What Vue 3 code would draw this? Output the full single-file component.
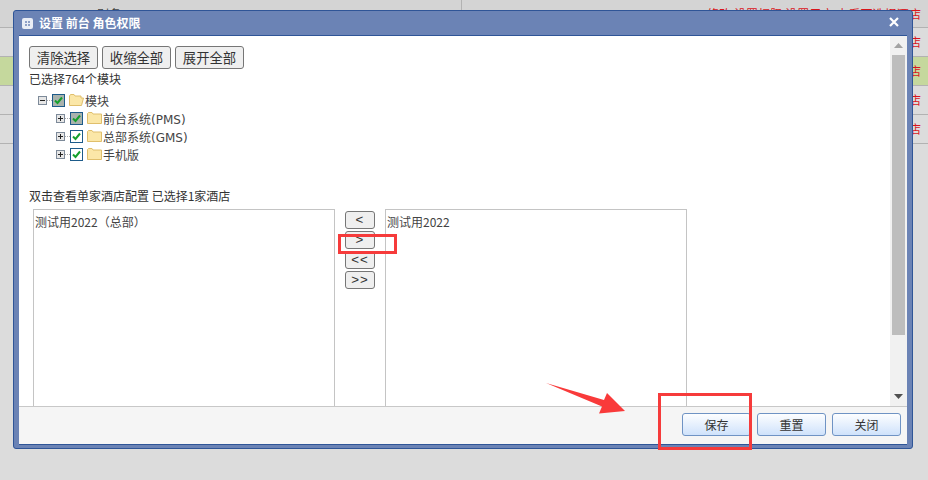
<script setup>
const rows = [
  { id: 1, name: '别名', green: false },
  { id: 2, name: '', green: false },
  { id: 3, name: '', green: true },
  { id: 4, name: '', green: false },
  { id: 5, name: '', green: false }
]
const tree = [
  { label: '前台系统(PMS)', partial: true },
  { label: '总部系统(GMS)', partial: false },
  { label: '手机版', partial: false }
]
const moveButtons = ['<', '>', '<<', '>>']
</script>

<template>
  <div class="screen">
    <div class="table">
      <div v-for="r in rows" :key="r.id" class="row" :class="{ green: r.green, head: r.id === 1 }">
        <span class="cell-name">{{ r.name }}</span>
        <span v-if="r.id === 1" class="cell-divider"></span>
        <span class="cell-ops">修改 设置权限 设置用户 查看可选择酒店</span>
      </div>
    </div>

    <div class="dialog">
      <div class="title">
        <svg class="title-icon" width="11" height="11" viewBox="0 0 11 11">
          <rect x="0" y="0" width="11" height="11" rx="2" fill="#e9edf5" />
          <rect x="3" y="3" width="2" height="2" fill="#8d9fc6" />
          <rect x="6" y="3" width="2" height="2" fill="#8d9fc6" />
          <rect x="3" y="6" width="2" height="2" fill="#8d9fc6" />
          <rect x="6" y="6" width="2" height="2" fill="#8d9fc6" />
        </svg>
        <span class="title-text">设置 前台 角色权限</span>
        <svg class="close" width="10" height="10" viewBox="0 0 10 10">
          <path d="M1 1 L9 9 M9 1 L1 9" stroke="#fff" stroke-width="2.2" fill="none" />
        </svg>
      </div>

      <div class="inner">
        <div class="scroller">
          <div class="content">
            <div class="top-buttons">
              <button class="plain">清除选择</button>
              <button class="plain">收缩全部</button>
              <button class="plain">展开全部</button>
            </div>
            <div class="line selected">已选择764个模块</div>

            <div class="tree">
              <div class="node root">
                <svg class="toggle" width="9" height="9" viewBox="0 0 9 9">
                  <rect x=".5" y=".5" width="8" height="8" fill="#e6e6e6" stroke="#7d8a99" />
                  <path d="M2 4.5 H7" stroke="#222" />
                </svg>
                <span class="dash"></span>
                <span class="check partial">
                  <svg width="11" height="11" viewBox="0 0 11 11"><path d="M2 5.5 L4.5 8 L9 2.5" stroke="#16a02c" stroke-width="2" fill="none" /></svg>
                </span>
                <svg class="folder" width="15" height="12" viewBox="0 0 15 12">
                  <path d="M.5 2 L1.5 .5 H5 L6 2 H12 V4 H14.5 L12.5 11.5 H.5 Z" fill="#fbe7a8" stroke="#e0bf6c" />
                </svg>
                <span class="label">模块</span>
              </div>
              <div v-for="n in tree" :key="n.label" class="node child">
                <svg class="toggle" width="9" height="9" viewBox="0 0 9 9">
                  <rect x=".5" y=".5" width="8" height="8" fill="#e6e6e6" stroke="#7d8a99" />
                  <path d="M2 4.5 H7 M4.5 2 V7" stroke="#222" />
                </svg>
                <span class="dash"></span>
                <span class="check" :class="{ partial: n.partial }">
                  <svg width="11" height="11" viewBox="0 0 11 11"><path d="M2 5.5 L4.5 8 L9 2.5" stroke="#16a02c" stroke-width="2" fill="none" /></svg>
                </span>
                <svg class="folder" width="15" height="12" viewBox="0 0 15 12">
                  <path d="M.5 1.5 L1.5 .5 H5 L6 2 H14.5 V11.5 H.5 Z" fill="#fbe7a8" stroke="#e0bf6c" />
                </svg>
                <span class="label">{{ n.label }}</span>
              </div>
            </div>

            <div class="line hint">双击查看单家酒店配置 已选择1家酒店</div>

            <div class="transfer">
              <div class="listbox">测试用2022（总部）</div>
              <div class="move">
                <button v-for="b in moveButtons" :key="b" class="plain small">{{ b }}</button>
              </div>
              <div class="listbox">测试用2022</div>
            </div>
          </div>

          <div class="scrollbar">
            <svg width="9" height="5" viewBox="0 0 9 5"><path d="M0 5 L4.5 0 L9 5 Z" fill="#a3a3a3" /></svg>
            <div class="thumb"></div>
            <svg width="9" height="5" viewBox="0 0 9 5"><path d="M0 0 L4.5 5 L9 0 Z" fill="#505050" /></svg>
          </div>
        </div>

        <div class="footer">
          <button class="blue">保存</button>
          <button class="blue">重置</button>
          <button class="blue">关闭</button>
        </div>
      </div>
    </div>

    <div class="mark mark-move"></div>
    <div class="mark mark-save"></div>
    <svg class="arrow" width="928" height="480" viewBox="0 0 928 480">
      <path d="M546 383 L604 400 L607 393 L625 411 L599 413.5 L602 406.5 Z" fill="#f93a3a" />
    </svg>
  </div>
</template>

<style>
html, body { margin: 0; padding: 0; background: #dcdcdc; }
</style>

<style scoped>
.screen {
  position: relative;
  width: 928px;
  height: 480px;
  overflow: hidden;
  background: #dcdcdc;
  font-family: "Noto Sans CJK SC", "Liberation Sans", sans-serif;
  font-size: 12px;
  color: #333;
}
.table { display: flex; flex-direction: column; }
.row {
  position: relative;
  display: flex;
  justify-content: space-between;
  align-items: center;
  height: 28px;
  border-bottom: 1px solid #b2b2b2;
  padding-right: 7px;
  line-height: 28px;
  white-space: nowrap;
}
.row.head {
  height: 27px;
  background: #d4d4d4;
}
.row.green { background: #c5d89d; }
.cell-name { margin-left: 97px; color: #444; }
.cell-divider {
  position: absolute;
  left: 461px;
  top: 0;
  bottom: 0;
  width: 1px;
  background: #b2b2b2;
}
.cell-ops { color: #d9151b; letter-spacing: 0.1px; }

.dialog {
  position: absolute;
  left: 13px;
  top: 10px;
  width: 900px;
  height: 439px;
  box-sizing: border-box;
  display: flex;
  flex-direction: column;
  padding: 0 5px 3px;
  background: #6b83b5;
  border: 1px solid #2f5597;
  border-radius: 3px;
}
.title {
  flex: none;
  height: 24px;
  display: flex;
  align-items: center;
  gap: 6px;
  margin: 0 -5px;
  padding: 0 13px 0 8px;
  color: #fff;
  font-weight: 700;
}
.title-text { flex: 1; line-height: 24px; }
.close { margin-top: -2px; }
.inner {
  flex: 1;
  min-height: 0;
  display: flex;
  flex-direction: column;
  background: #fff;
  border-top: 1px solid #2f5597;
  border-bottom: 1px solid #2f5597;
}
.scroller {
  flex: 1;
  min-height: 0;
  display: flex;
  overflow: hidden;
}
.content {
  flex: 1;
  min-width: 0;
  overflow: hidden;
  padding: 10px 0 0 10px;
}
.top-buttons { display: flex; gap: 4px; }
button {
  margin: 0;
  padding: 0;
  font-family: inherit;
  box-sizing: border-box;
  color: #333;
}
.plain {
  width: 69px;
  height: 23px;
  font-size: 13.33px;
  line-height: 21px;
  background: #efefef;
  border: 1px solid #767676;
  border-radius: 3px;
}
.line { line-height: 18px; height: 18px; color: #333; }
.selected { margin-top: 1px; }
.tree { margin: 3px 0 0 9px; height: 93px; }
.node {
  display: flex;
  align-items: center;
  height: 18px;
}
.child { padding-left: 18px; }
.toggle { flex: none; }
.dash {
  flex: none;
  width: 5px;
  height: 0;
  border-top: 1px dotted #aaa;
}
.check {
  flex: none;
  box-sizing: border-box;
  width: 13px;
  height: 13px;
  border: 1px solid #1d5b8a;
  background: #fff;
  display: flex;
  align-items: center;
  justify-content: center;
}
.check.partial { background: #a9b2ad; }
.folder { flex: none; margin-left: 4px; }
.label {
  margin-left: 1px;
  color: #444;
  font-family: "DejaVu Sans", "Noto Sans CJK SC", sans-serif;
  font-size: 12px;
}
.hint { margin-top: 3px; }
.transfer {
  display: flex;
  margin: 4px 0 0 4px;
  height: 240px;
}
.listbox {
  box-sizing: border-box;
  width: 302px;
  height: 240px;
  border: 1px solid #c4c4c4;
  padding: 3px 1px;
  line-height: 18px;
  color: #444;
}
.move {
  width: 50px;
  display: flex;
  flex-direction: column;
  align-items: center;
  gap: 2px;
  padding-top: 2px;
}
.plain.small {
  width: 30px;
  height: 18px;
  line-height: 14px;
  font-size: 13.33px;
  letter-spacing: 1px;
  font-family: "Liberation Sans", sans-serif;
  font-weight: 400;
}
.scrollbar {
  flex: none;
  width: 17px;
  background: #f1f1f1;
  display: flex;
  flex-direction: column;
  align-items: center;
  justify-content: space-between;
  padding: 7px 0 7px;
  box-sizing: border-box;
}
.thumb {
  width: 13px;
  height: 280px;
  background: #bdbdbd;
  margin-top: 3px;
  margin-bottom: 56px;
}
.footer {
  flex: none;
  height: 38px;
  box-sizing: border-box;
  border-top: 1px solid #c8c8c8;
  background: #f5f5f5;
  display: flex;
  justify-content: flex-end;
  gap: 6px;
  padding: 6px 6px 0 0;
}
.blue {
  width: 69px;
  height: 23px;
  font-size: 12px;
  line-height: 20px;
  background: linear-gradient(#fdfeff, #cfe2fb);
  border: 1px solid #6f93c4;
  border-radius: 3px;
}
.mark {
  position: absolute;
  box-sizing: border-box;
  border: 3px solid #f63b3b;
}
.mark-move { left: 338px; top: 234px; width: 59px; height: 20px; }
.mark-save { left: 658px; top: 393px; width: 94px; height: 57px; }
.arrow { position: absolute; left: 0; top: 0; pointer-events: none; }
</style>
